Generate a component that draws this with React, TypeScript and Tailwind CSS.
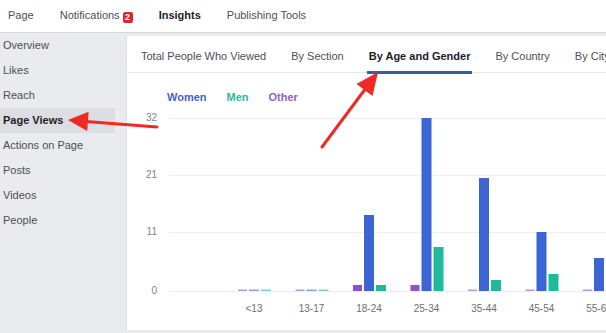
import React from 'react'

const navItems = ['Page', 'Notifications', 'Insights', 'Publishing Tools']
const sideItems = ['Overview', 'Likes', 'Reach', 'Page Views', 'Actions on Page', 'Posts', 'Videos', 'People']
const tabs = ['Total People Who Viewed', 'By Section', 'By Age and Gender', 'By Country', 'By City']

// [other, women, men] in bar pixels at 5.4px per view
const groups: { label: string; bars: [number, number, number] }[] = [
  { label: '<13', bars: [0, 0, 0] },
  { label: '13-17', bars: [0, 0, 0] },
  { label: '18-24', bars: [6, 76, 6] },
  { label: '25-34', bars: [6, 173, 44] },
  { label: '35-44', bars: [0, 113, 11] },
  { label: '45-54', bars: [0, 59, 17] },
  { label: '55-64', bars: [0, 33, 4] },
]

const colors = ['#8c52c6', '#3d64d4', '#1fba9b']
const font = { fontFamily: '"Liberation Sans", Arial, sans-serif' }

function Chart() {
  const zero = 182
  const grid = [
    { v: '32', y: 9 },
    { v: '21', y: 66 },
    { v: '11', y: 123 },
    { v: '0', y: zero },
  ]
  return (
    <svg width="480" height="222" className="block" style={font}>
      {grid.map((g) => (
        <g key={g.v}>
          <line x1="42" x2="480" y1={g.y + 0.5} y2={g.y + 0.5} stroke="#eceef1" />
          <text x="30" y={g.y} textAnchor="end" dominantBaseline="middle" fontSize="10" fill="#7f838a">
            {g.v}
          </text>
        </g>
      ))}
      {groups.map((grp, i) => {
        const c = 127 + i * 57.5
        const xs = [c - 16, c - 5, c + 7]
        const ws = [9, 10, 10]
        return (
          <g key={grp.label}>
            {grp.bars.map((h, j) => {
              const hh = h === 0 ? 1.5 : h
              return (
                <rect
                  key={j}
                  x={xs[j]}
                  y={zero - hh}
                  width={ws[j]}
                  height={hh}
                  fill={colors[j]}
                  opacity={h === 0 ? 0.6 : 1}
                />
              )
            })}
            <text x={c} y="203" textAnchor="middle" fontSize="10" fill="#6b6f76">
              {grp.label}
            </text>
          </g>
        )
      })}
    </svg>
  )
}

export default function App() {
  return (
    <div className="relative w-[606px] h-[333px] overflow-hidden bg-[#e9ebee] text-[11px]" style={font}>
      <div className="h-[33px] bg-white border-b border-[#d3d5d9] flex items-center gap-[26px] pl-[8px] pb-[2px]">
        {navItems.map((n) => (
          <div key={n} className={n === 'Insights' ? 'font-bold text-[#1d2129]' : 'text-[#4b4f56]'}>
            {n}
            {n === 'Notifications' && (
              <span className="ml-[3px] inline-flex items-center justify-center w-[10px] h-[11px] rounded-[2px] bg-[#e0262f] text-white text-[9px] font-bold leading-none align-[-1px]">
                2
              </span>
            )}
          </div>
        ))}
      </div>

      <div className="flex h-[300px]">
        <div className="w-[126px] shrink-0">
          {sideItems.map((s) => (
            <div
              key={s}
              className={
                s === 'Page Views'
                  ? 'h-[25px] flex items-center pl-[3px] mr-[11px] bg-[#dcdee2] font-bold text-[#1d2129]'
                  : 'h-[25px] flex items-center pl-[3px] mr-[11px] text-[#4b4f56]'
              }
            >
              {s}
            </div>
          ))}
        </div>

        <div className="flex-1 mt-[3px] mb-[3px] bg-white border-l border-[#dddfe2]">
          <div className="h-[37px] flex items-end gap-[21px] pl-[10px] border-b border-[#e5e6e9] ml-[2px]">
            {tabs.map((t) => (
              <div
                key={t}
                className={
                  t === 'By Age and Gender'
                    ? 'relative px-[2px] pb-[9px] leading-[13px] whitespace-nowrap font-bold text-[#1d2129]'
                    : 'relative px-[2px] pb-[9px] leading-[13px] whitespace-nowrap text-[#4b4f56]'
                }
              >
                {t}
                {t === 'By Age and Gender' && (
                  <div className="absolute left-0 right-0 bottom-[-2px] h-[3px] bg-[#3b5ca8]" />
                )}
              </div>
            ))}
          </div>
          <div className="flex gap-[20px] pl-[40px] pt-[18px] h-[36px] font-bold leading-[13px]">
            <span className="text-[#4b5fc6]">Women</span>
            <span className="text-[#2bb89a]">Men</span>
            <span className="text-[#8d62c7]">Other</span>
          </div>
          <Chart />
        </div>
      </div>

      <svg className="absolute inset-0 pointer-events-none" width="606" height="333">
        <line x1="157" y1="127" x2="86" y2="121.5" stroke="#ee2a24" strokeWidth="3" strokeLinecap="round" />
        <polygon points="68,120 88.6,111.8 87.2,131" fill="#ee2a24" />
        <line x1="322" y1="147" x2="366" y2="88" stroke="#ee2a24" strokeWidth="3" strokeLinecap="round" />
        <polygon points="378,72 372.5,96 356.5,84" fill="#ee2a24" />
      </svg>
    </div>
  )
}
